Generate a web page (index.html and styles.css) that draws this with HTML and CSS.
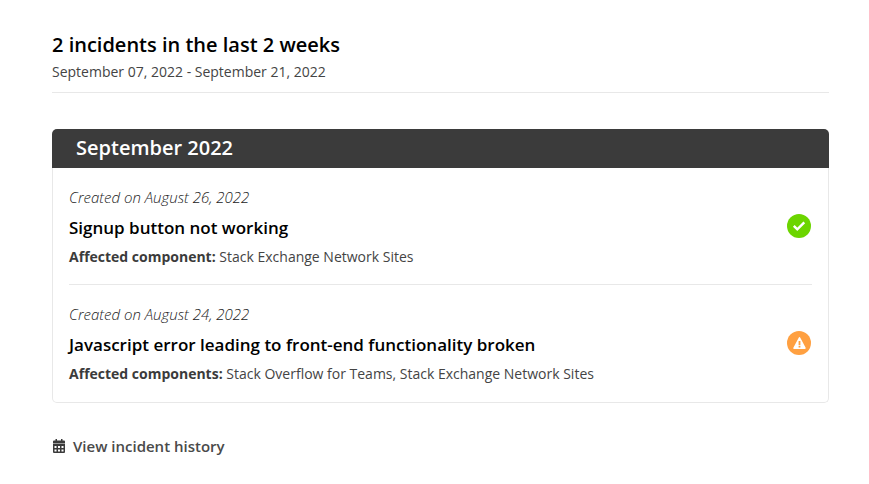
FILE: index.html
```html
<!DOCTYPE html>
<html lang="en">
<head>
<meta charset="utf-8">
<meta name="viewport" content="width=device-width, initial-scale=1">
<title>Incidents</title>
<link rel="stylesheet" href="styles.css">
</head>
<body>
<main class="page">
  <header class="summary">
    <h1 class="summary-title">2 incidents in the last 2 weeks</h1>
    <p class="summary-range">September 07, 2022 - September 21, 2022</p>
  </header>
  <section class="month">
    <h2 class="month-title">September 2022</h2>
    <div class="incidents">
      <article class="incident">
        <div>
          <p class="created">Created on August 26, 2022</p>
          <h3 class="incident-title">Signup button not working</h3>
          <p class="affected"><strong>Affected component:</strong> Stack Exchange Network Sites</p>
        </div>
        <svg class="status" viewBox="0 0 24 24" role="img" aria-label="Resolved">
          <circle cx="12" cy="12" r="12" fill="#6cd500"/>
          <path d="M6.8 11.8l3.5 3.5 7-7" fill="none" stroke="#fff" stroke-width="2.4"/>
        </svg>
      </article>
      <article class="incident">
        <div>
          <p class="created">Created on August 24, 2022</p>
          <h3 class="incident-title">Javascript error leading to front-end functionality broken</h3>
          <p class="affected"><strong>Affected components:</strong> Stack Overflow for Teams, Stack Exchange Network Sites</p>
        </div>
        <svg class="status" viewBox="0 0 24 24" role="img" aria-label="Warning">
          <circle cx="12" cy="12" r="12" fill="#ffa041"/>
          <path d="M12.5 6.8l5.5 10.4h-11z" fill="#fff" stroke="#fff" stroke-width="1.5" stroke-linejoin="round"/>
          <path d="M12.5 10v4M12.5 14.8v1.8" stroke="#ffa041" stroke-width="1.8"/>
        </svg>
      </article>
    </div>
  </section>
  <a class="history" href="#">
    <svg class="calendar" viewBox="0 0 12 14" aria-hidden="true">
      <path fill="#3b3b3b" d="M2.5 0h1.5v1.5h4V0h1.5v1.5H11q1 0 1 1V4H0V2.5q0-1 1-1h1.5zM0 4.6h12V13q0 1-1 1H1q-1 0-1-1z"/>
      <path fill="#fff" d="M1.5 7h2v2h-2zM5 7h2v2H5zM8.5 7h2v2h-2zM1.5 10.5h2v2h-2zM5 10.5h2v2H5zM8.5 10.5h2v2h-2z"/>
    </svg>
    <span>View incident history</span>
  </a>
</main>
</body>
</html>
```
FILE: styles.css
```css
* { box-sizing: border-box; }
body {
  margin: 0;
  background: #fff;
  color: #444;
  font-family: "Open Sans", sans-serif;
  font-size: 14px;
  line-height: 20px;
}
h1, h2, h3, p { margin: 0; }
.page { padding: 32px 40px 24px 52px; }
.summary {
  padding-bottom: 10px;
  border-bottom: 1px solid #e8e8e8;
}
.summary-title {
  margin-bottom: 4px;
  color: #000;
  font-size: 20px;
  font-weight: 600;
  line-height: 26px;
}
.month { margin-top: 36px; }
.month-title {
  padding: 5px 24px 7px;
  border-radius: 5px 5px 0 0;
  background: #3b3b3b;
  color: #fff;
  font-size: 20px;
  font-weight: 600;
  line-height: 27px;
}
.incidents {
  padding: 0 16px 1px;
  border: 1px solid #e8e8e8;
  border-top: 0;
  border-radius: 0 0 5px 5px;
}
.incident {
  display: flex;
  align-items: center;
  justify-content: space-between;
  gap: 16px;
  padding: 19px 0 17px;
}
.incident + .incident { border-top: 1px solid #e8e8e8; }
.created {
  color: #222;
  font-size: 15px;
  font-style: italic;
  font-weight: 300;
}
.incident-title {
  margin: 10px 0 8px;
  color: #000;
  font-size: 17px;
  font-weight: 600;
  line-height: 22px;
}
.affected strong {
  color: #3b3b3b;
  font-weight: 700;
}
.status {
  flex: none;
  width: 24px;
  height: 24px;
  margin: 0 1px 2px 0;
}
.history {
  display: inline-flex;
  align-items: center;
  gap: 8px;
  margin-top: 33px;
  padding-left: 1px;
  color: #4a4a4a;
  font-size: 15px;
  font-weight: 600;
  text-decoration: none;
}
.calendar { width: 12px; height: 14px; }
```
